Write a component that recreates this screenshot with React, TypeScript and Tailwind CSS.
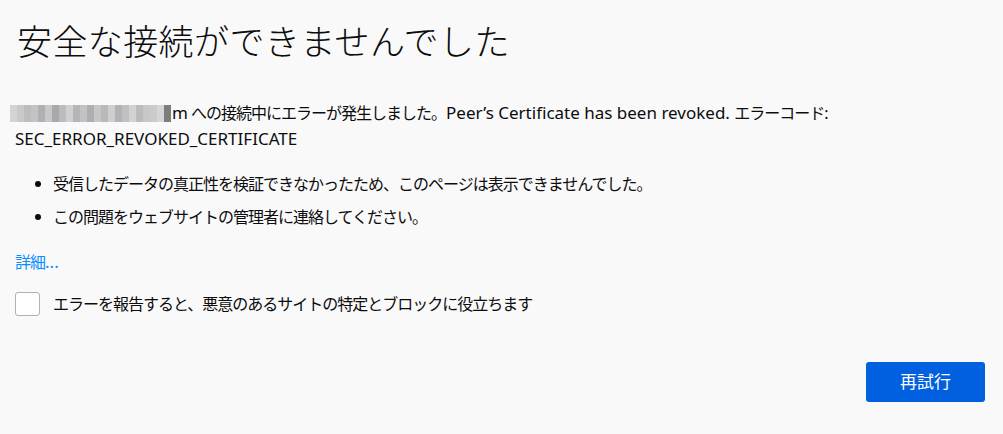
import React from 'react';

// mosaic blocks standing in for the blurred host name
const BLUR = [
  '#d4d4d6', '#c9c9cc', '#bdbdc0', '#c4c4c7', '#b0b0b4', '#c8c8cb', '#a9a9ad', '#bcbcbf',
  '#d0d0d2', '#b5b5b9', '#c2c2c5', '#aeaeb2', '#c6c6c9', '#b9b9bc', '#cfcfd1', '#b3b3b7',
  '#c0c0c3', '#d2d2d4', '#bbbbbe', '#c7c7ca', '#cbcbcd', '#d6d6d8', '#7d7d80',
];

function L({ children }: { children: React.ReactNode }) {
  return <span className="text-[17px] tracking-normal">{children}</span>;
}

export default function App() {
  return (
    <div
      className="w-[1003px] h-[434px] bg-[#f9f9fa] text-[#0c0c0d] overflow-hidden"
      style={{ fontFamily: '"Noto Sans", "Noto Sans CJK JP", sans-serif' }}
    >
      <div className="pl-[15px] pr-[18px] pt-[14px] flex flex-col">
        <h1 className="ml-[2px] text-[35px] font-light leading-[56px] tracking-[0.4px]">
          安全な接続ができませんでした
        </h1>

        <div className="mt-[30px] text-[16px] tracking-[-1px] leading-[26px]">
          <div className="flex items-center -ml-[5px]">
            <span className="flex h-[17px] items-stretch mr-[1px]">
              {BLUR.map((c, i) => (
                <span key={i} className="w-[7px]" style={{ background: c }} />
              ))}
            </span>
            <span>
              <L>m</L> への接続中にエラーが発生しました。<L>Peer’s Certificate has been revoked. </L>エラーコード:
            </span>
          </div>
          <div>
            <L>SEC_ERROR_REVOKED_CERTIFICATE</L>
          </div>
        </div>

        <ul className="mt-[19px] text-[16px] tracking-[-1px] leading-[26px] flex flex-col gap-[7px]">
          <li className="flex items-center">
            <span className="w-[6px] h-[6px] rounded-full bg-[#0c0c0d] ml-[20px] mr-[12px]" />
            受信したデータの真正性を検証できなかったため、このページは表示できませんでした。
          </li>
          <li className="flex items-center">
            <span className="w-[6px] h-[6px] rounded-full bg-[#0c0c0d] ml-[20px] mr-[12px]" />
            この問題をウェブサイトの管理者に連絡してください。
          </li>
        </ul>

        <a className="mt-[19px] text-[16px] tracking-[-1px] leading-[26px] text-[#0a8dff] w-fit">
          詳細<L>...</L>
        </a>

        <label className="mt-[16px] flex items-center text-[16px] tracking-[-1px] leading-[26px]">
          <span className="w-[25px] h-[24px] rounded-[3px] border border-[#b1b1b3] bg-white mr-[13px]" />
          エラーを報告すると、悪意のあるサイトの特定とブロックに役立ちます
        </label>

        <div className="flex justify-end mt-[45px]">
          <button className="w-[119px] h-[40px] rounded-[3px] bg-[#0060df] text-white text-[17px]">
            再試行
          </button>
        </div>
      </div>
    </div>
  );
}
